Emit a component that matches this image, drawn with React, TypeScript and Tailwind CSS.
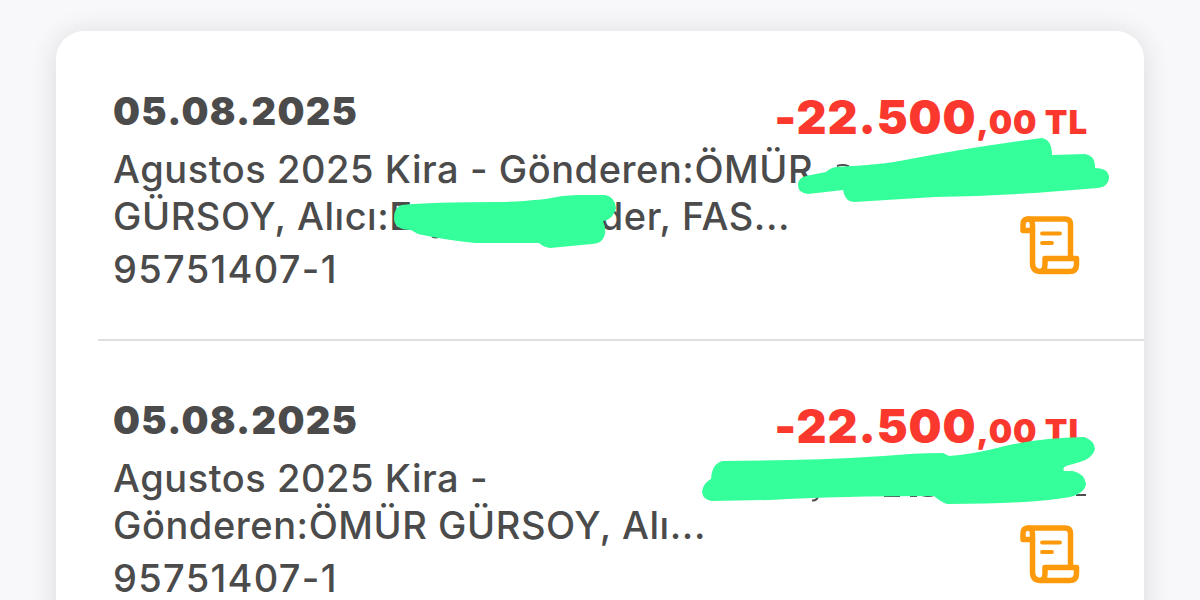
interface Transaction {
  date: string;
  lines: React.ReactNode[];
  reference: string;
}

const transactions: Transaction[] = [
  {
    date: "05.08.2025",
    lines: [
      "Agustos 2025 Kira - Gönderen:ÖMÜR",
      <>
        GÜRSOY, Alıcı:E
        <span className="inline-block w-[187px]" />
        der, FAS...
      </>,
    ],
    reference: "95751407-1",
  },
  {
    date: "05.08.2025",
    lines: ["Agustos 2025 Kira -", "Gönderen:ÖMÜR GÜRSOY, Alı..."],
    reference: "95751407-1",
  },
];

function ReceiptIcon() {
  return (
    <svg
      className="h-[60px] w-[60px]"
      viewBox="0 0 60 60"
      fill="none"
      stroke="#fc9a0b"
      strokeWidth="5.5"
      strokeLinecap="round"
      strokeLinejoin="round"
    >
      <path d="M12.500 15.500H3V9.500Q3 4 8.500 4H45Q50.500 4 50.500 9.500V42" />
      <path d="M8 4Q12.500 4 12.500 10V48Q12.500 56.500 21 56.500H49.500Q56.500 56.500 56.500 49.500V43.500H25V49.500Q25 56.500 19.500 56.500" />
      <path strokeWidth="3.800" d="M22 18.500H40M22 28H32" />
    </svg>
  );
}

function TransactionRow({ transaction }: { transaction: Transaction }) {
  return (
    <div className="flex h-[309px] shrink-0 justify-between pl-[57px] pr-14 pt-[57px]">
      <div className="whitespace-nowrap text-[38px] font-medium leading-[47px] tracking-[0.55px] text-[#4b4b4b]">
        <div className="mb-[11px] font-black tracking-[1.3px]">
          {transaction.date}
        </div>
        {transaction.lines.map((line, index) => (
          <div key={index}>{line}</div>
        ))}
        <div className="mt-1.5 tracking-[1.3px]">{transaction.reference}</div>
      </div>
      <div className="flex w-0 flex-col items-end">
        <div className="mt-1 whitespace-nowrap text-[46.5px] font-black leading-[50px] tracking-[0.9px] text-[#fb382e]">
          -22.500<span className="text-[33px]">,00 TL</span>
        </div>
        <div className="mr-2 mt-[68px]">
          <ReceiptIcon />
        </div>
      </div>
    </div>
  );
}

function MarkerStrokes() {
  return (
    <svg
      className="pointer-events-none absolute left-0 top-0 h-[600px] w-[1200px]"
      viewBox="0 0 1200 600"
      fill="none"
    >
      <g stroke="#4f4f4f" strokeWidth="2">
        <path d="M837 166Q843 164 849 166.500" />
        <path d="M432 236.500Q437 238.500 440 236M533 201H537" />
        <path d="M812 500.500Q817 501 818 496M838 496H850M884 496H900M910 496H917M922 495Q928 497 934 495M1076 495H1086" />
      </g>
      <g fill="#34ff9a">
        <path d="M806 176L826 172Q830 168 836 167C870 165 885 164 905 160Q970 147 1042 138Q1052 140 1052 155L1085 154Q1096 156 1095 168Q1109 168 1109 178Q1108 187 1098 188L1060 191Q1000 196 935 197L854 202Q845 202 843 190L808 194Q798 193 798 185Q798 178 806 176Z" />
        <path d="M394 218Q394 207 402 205Q430 202 500 202Q540 201 562 196L577 195L605 195Q615 197 616 208Q613 220 603 221Q607 230 604 237Q601 244 592 244L550 248Q543 247 539 243H475Q445 240 418 234L411 230Q394 230 394 218Z" />
        <path d="M702 492Q703 483 711 479Q712 463 723 461L790 460Q850 459 910 454Q930 453 943 453L949 456Q975 454 1005 446Q1040 438 1084 437Q1094 440 1095 449Q1093 458 1080 462L1066 466Q1062 468 1064 471L1073 471Q1085 474 1086 484Q1085 493 1070 497Q1030 504 947 504Q941 502 934 496Q840 496 770 500L712 501Q703 500 702 492Z" />
      </g>
    </svg>
  );
}

export default function App() {
  return (
    <main className="relative h-[600px] overflow-hidden bg-[#f8f8fb] px-14 pt-[31px] font-['Inter',sans-serif]">
      <div className="h-[660px] rounded-[28px] bg-white shadow-[0_2px_28px_rgba(0,0,0,0.12)]">
        {transactions.map((transaction, index) => (
          <div key={index}>
            {index > 0 && <div className="-mb-px -mt-px ml-[42px] h-0.5 bg-[#dedede]" />}
            <TransactionRow transaction={transaction} />
          </div>
        ))}
      </div>
      <MarkerStrokes />
    </main>
  );
}
